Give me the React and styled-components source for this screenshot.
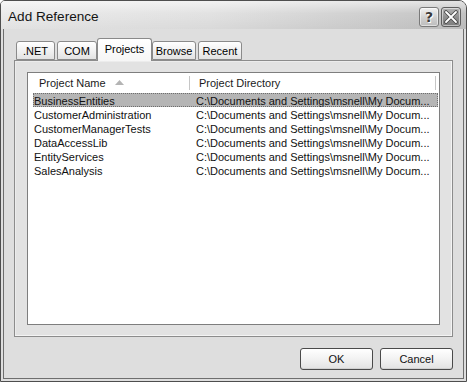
import React from "react";
import styled, { createGlobalStyle } from "styled-components";

const Global = createGlobalStyle`
  html, body { margin: 0; padding: 0; background: #ffffff; }
  body { font-family: "Liberation Sans", Arial, sans-serif; }
  * { box-sizing: border-box; }
`;

const Window = styled.div`
  width: 467px;
  height: 382px;
  border: 1px solid #4e4e4e;
  border-radius: 5px 8px 0 0;
  background: #dedede;
  display: flex;
  flex-direction: column;
  overflow: hidden;
`;

const TitleBar = styled.div`
  height: 28px;
  flex: none;
  display: flex;
  align-items: center;
  padding: 0 5px 0 7px;
  background:
    linear-gradient(to bottom, rgba(255,255,255,0.55), rgba(255,255,255,0) 45%, rgba(0,0,0,0.04)),
    linear-gradient(to right, #ebebeb, #e2e2e2 45%, #cfcfcf 80%, #c2c2c2);
`;

const Title = styled.div`
  flex: 1;
  font-size: 13.6px;
  color: #141414;
  padding-top: 3px;
`;

const CaptionButtons = styled.div`
  display: flex;
  gap: 2px;
  padding-top: 3px;
`;

const CaptionButton = styled.div`
  width: 20px;
  height: 20px;
  border: 1px solid ${(p) => (p.$dark ? "#5e5e5e" : "#7a7a7a")};
  border-radius: 3px;
  display: flex;
  align-items: center;
  justify-content: center;
  background: ${(p) =>
    p.$dark
      ? "linear-gradient(to bottom, #b4b4b4, #8c8c8c 55%, #7e7e7e)"
      : "linear-gradient(to bottom, #f2f2f2, #cfcfcf 55%, #bdbdbd)"};
  box-shadow: inset 0 0 0 1px rgba(255,255,255,0.5);
  font-family: "DejaVu Sans", sans-serif;
  font-weight: bold;
  font-size: 14px;
  color: #3a3a3a;
  text-shadow: 0 0 1px #fff, 1px 1px 0 #fff;
`;

const Body = styled.div`
  flex: 1;
  margin: 0 2px 2px 2px;
  border: 1px solid #6e6e6e;
  border-top: none;
  padding: 10px 10px 8px 10px;
  display: flex;
  flex-direction: column;
  font-size: 11px;
  color: #000;
`;

const TabRow = styled.div`
  height: 21px;
  flex: none;
  display: flex;
  align-items: flex-end;
  gap: 2px;
  padding-left: 2px;
  position: relative;
  z-index: 1;
`;

const Tab = styled.div`
  width: ${(p) => p.$w}px;
  height: ${(p) => (p.$active ? 23 : 19)}px;
  margin: ${(p) => (p.$active ? "0 -2px -1px -2px" : "0")};
  border: 1px solid #8a8a8a;
  border-bottom: ${(p) => (p.$active ? "none" : "1px solid #8a8a8a")};
  border-radius: 3px 3px 0 0;
  background: ${(p) =>
    p.$active
      ? "linear-gradient(to bottom, #ffffff, #f6f6f6)"
      : "linear-gradient(to bottom, #ffffff, #ececec 70%, #e2e2e2)"};
  display: flex;
  align-items: center;
  justify-content: center;
  padding-top: ${(p) => (p.$active ? 0 : 1)}px;
  padding-bottom: ${(p) => (p.$active ? 3 : 0)}px;
  white-space: nowrap;
`;

const Panel = styled.div`
  flex: 1;
  border: 1px solid #8c8c8c;
  box-shadow: inset -1px -1px 0 #f4f4f4, inset 1px 1px 0 #ececec;
  background: #e2e2e2;
  padding: 11px 12px 11px 12px;
  display: flex;
`;

const ListBox = styled.div`
  flex: 1;
  background: #ffffff;
  border: 1px solid #7e7e7e;
  display: flex;
  flex-direction: column;
`;

const HeaderRow = styled.div`
  height: 20px;
  display: flex;
  align-items: center;
  flex: none;
`;

const HeaderCell = styled.div`
  width: ${(p) => p.$w}px;
  height: 100%;
  display: flex;
  align-items: center;
  padding-left: ${(p) => p.$pl}px;
  position: relative;
  color: #1a1a1a;
  white-space: nowrap;
`;

const Separator = styled.span`
  position: absolute;
  right: 0;
  top: 3px;
  bottom: 3px;
  width: 1px;
  background: #c6c6c6;
`;

const SortArrow = styled.svg`
  margin-left: 9px;
  margin-top: -1px;
`;

const Rows = styled.div`
  display: flex;
  flex-direction: column;
  padding-left: 5px;
  padding-right: 1px;
`;

const Row = styled.div`
  height: 14px;
  display: flex;
  align-items: center;
  padding-top: 1px;
  background: ${(p) => (p.$selected ? "#b5b5b5" : "transparent")};
  outline: ${(p) => (p.$selected ? "1px dotted #6e6e6e" : "none")};
  outline-offset: -1px;
  white-space: nowrap;
`;

const Cell = styled.div`
  width: ${(p) => p.$w}px;
  padding-left: ${(p) => p.$pl}px;
  overflow: hidden;
  color: #111;
`;

const ButtonRow = styled.div`
  flex: none;
  margin-top: 11px;
  display: flex;
  justify-content: flex-end;
  gap: 7px;
`;

const Button = styled.div`
  width: 73px;
  height: 22px;
  border: 1px solid #4a4a4a;
  border-radius: 3px;
  background: linear-gradient(to bottom, #ffffff, #f2f2f2 50%, #e2e2e2);
  box-shadow: inset 0 -1px 0 #d0d0d0, inset 0 1px 0 #ffffff;
  display: flex;
  align-items: center;
  justify-content: center;
  color: #111;
`;

const tabs = [
  { label: ".NET", w: 39 },
  { label: "COM", w: 40 },
  { label: "Projects", w: 55, active: true },
  { label: "Browse", w: 44 },
  { label: "Recent", w: 44 },
];

const projects = [
  "BusinessEntities",
  "CustomerAdministration",
  "CustomerManagerTests",
  "DataAccessLib",
  "EntityServices",
  "SalesAnalysis",
];

const dir = "C:\\Documents and Settings\\msnell\\My Docum...";

export default function App() {
  return (
    <>
      <Global />
      <Window>
        <TitleBar>
          <Title>Add Reference</Title>
          <CaptionButtons>
            <CaptionButton>?</CaptionButton>
            <CaptionButton $dark>
              <svg width="14" height="14" viewBox="0 0 14 14">
                <path d="M2 2 L12 12 M12 2 L2 12" stroke="#4a4a4a" strokeWidth="3.6" strokeLinecap="round" />
                <path d="M2 2 L12 12 M12 2 L2 12" stroke="#ffffff" strokeWidth="1.8" strokeLinecap="round" />
              </svg>
            </CaptionButton>
          </CaptionButtons>
        </TitleBar>
        <Body>
          <TabRow>
            {tabs.map((t) => (
              <Tab key={t.label} $w={t.w} $active={t.active}>
                {t.label}
              </Tab>
            ))}
          </TabRow>
          <Panel>
            <ListBox>
              <HeaderRow>
                <HeaderCell $w={162} $pl={11}>
                  Project Name
                  <SortArrow width="9" height="5" viewBox="0 0 9 5">
                    <path d="M0 5 L4.5 0 L9 5 Z" fill="#b4b4b4" />
                  </SortArrow>
                  <Separator />
                </HeaderCell>
                <HeaderCell $w={246} $pl={9}>
                  Project Directory
                  <Separator />
                </HeaderCell>
              </HeaderRow>
              <Rows>
                {projects.map((p, i) => (
                  <Row key={p} $selected={i === 0}>
                    <Cell $w={158} $pl={1}>{p}</Cell>
                    <Cell $w={245} $pl={5}>{dir}</Cell>
                  </Row>
                ))}
              </Rows>
            </ListBox>
          </Panel>
          <ButtonRow>
            <Button>OK</Button>
            <Button>Cancel</Button>
          </ButtonRow>
        </Body>
      </Window>
    </>
  );
}
